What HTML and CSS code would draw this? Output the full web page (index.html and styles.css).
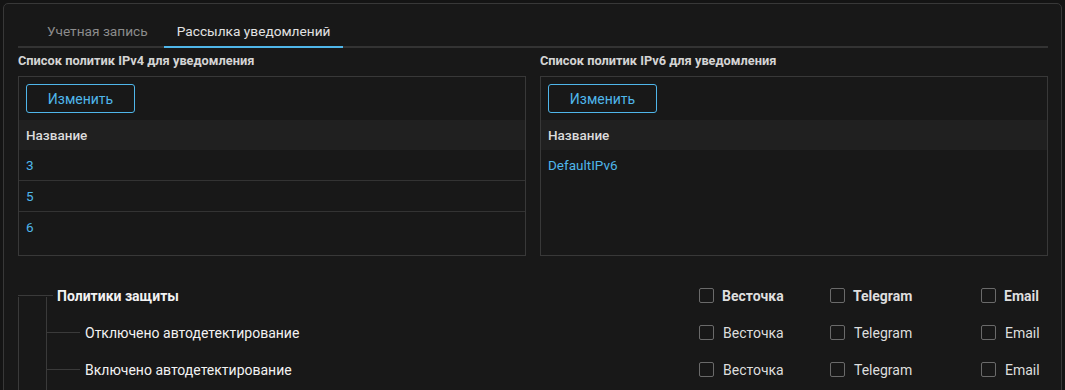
FILE: index.html
```html
<!DOCTYPE html>
<html lang="ru">
<head>
<meta charset="utf-8">
<link rel="stylesheet" href="styles.css">
</head>
<body>
<div class="card">
  <div class="tabs">
    <div class="tab">Учетная запись</div>
    <div class="tab active">Рассылка уведомлений</div>
  </div>
  <div class="lists">
    <section class="list">
      <div class="list-title">Список политик IPv4 для уведомления</div>
      <div class="panel">
        <button class="btn">Изменить</button>
        <div class="table">
          <div class="thead">Название</div>
          <div class="trow">3</div>
          <div class="trow">5</div>
          <div class="trow">6</div>
        </div>
      </div>
    </section>
    <section class="list">
      <div class="list-title">Список политик IPv6 для уведомления</div>
      <div class="panel">
        <button class="btn">Изменить</button>
        <div class="table">
          <div class="thead">Название</div>
          <div class="trow">DefaultIPv6</div>
        </div>
      </div>
    </section>
  </div>
  <div class="tree">
    <div class="tree-row root">
      <div class="label">Политики защиты</div>
      <div class="opts">
        <label class="opt o1"><span class="cb"></span><span>Весточка</span></label>
        <label class="opt o2"><span class="cb"></span><span>Telegram</span></label>
        <label class="opt o3"><span class="cb"></span><span>Email</span></label>
      </div>
    </div>
    <div class="tree-row child">
      <div class="label">Отключено автодетектирование</div>
      <div class="opts">
        <label class="opt o1"><span class="cb"></span><span>Весточка</span></label>
        <label class="opt o2"><span class="cb"></span><span>Telegram</span></label>
        <label class="opt o3"><span class="cb"></span><span>Email</span></label>
      </div>
    </div>
    <div class="tree-row child">
      <div class="label">Включено автодетектирование</div>
      <div class="opts">
        <label class="opt o1"><span class="cb"></span><span>Весточка</span></label>
        <label class="opt o2"><span class="cb"></span><span>Telegram</span></label>
        <label class="opt o3"><span class="cb"></span><span>Email</span></label>
      </div>
    </div>
  </div>
</div>
</body>
</html>
```

FILE: styles.css
```css
* { box-sizing: border-box; }
html, body { margin: 0; padding: 0; }
body {
  background: #141414;
  font-family: Roboto, "Liberation Sans", sans-serif;
  color: #e4e4e4;
  height: 390px;
  overflow: hidden;
}
.card {
  margin: 3px 3px 0 3px;
  border: 1px solid #383838;
  border-radius: 5px;
  background: #181818;
  padding: 12px 13px 0 14px;
  min-height: 420px;
}
.tabs {
  display: flex;
  gap: 3px;
  padding-left: 16px;
  border-bottom: 2px solid #333;
}
.tab {
  font-size: 13.7px;
  line-height: 16px;
  padding: 7px 13px;
  color: #8c8c8c;
  margin-bottom: -2px;
  border-bottom: 2px solid transparent;
}
.tab.active {
  color: #e2e2e2;
  border-bottom-color: #4fb6ea;
}
.lists {
  display: grid;
  grid-template-columns: 1fr 1fr;
  gap: 14px;
}
.list-title {
  font-size: 12.8px;
  font-weight: 700;
  line-height: 14px;
  padding: 6px 0 8px;
  color: #d4d4d4;
}
.panel {
  border: 1px solid #383838;
  height: 180px;
  padding-top: 7px;
}
.btn {
  display: block;
  margin-left: 7px;
  width: 109px;
  height: 29px;
  background: transparent;
  border: 1px solid #4fb6ea;
  border-radius: 3px;
  color: #4fb6ea;
  font-family: inherit;
  font-size: 14px;
  padding: 0;
}
.table { margin-top: 7px; }
.thead {
  background: #202020;
  height: 30px;
  line-height: 30px;
  padding-left: 7px;
  font-size: 13.5px;
  font-weight: 500;
  color: #dcdcdc;
}
.trow {
  height: 31px;
  line-height: 30px;
  padding-left: 7px;
  font-size: 13.5px;
  color: #4fb6ea;
  border-bottom: 1px solid #333;
}
.trow:last-child { border-bottom: none; }
.tree {
  position: relative;
  margin-top: 21px;
  padding-bottom: 12px;
}
.tree::before {
  content: "";
  position: absolute;
  left: 0;
  top: 20px;
  bottom: 0;
  width: 1px;
  background: #3a3a3a;
}
.tree::after {
  content: "";
  position: absolute;
  left: 28px;
  top: 20px;
  bottom: 0;
  width: 1px;
  background: #3a3a3a;
}
.tree-row {
  position: relative;
  display: flex;
  align-items: center;
  height: 37px;
}
.tree-row::before {
  content: "";
  position: absolute;
  top: 18px;
  height: 1px;
  background: #3a3a3a;
}
.root::before { left: 0; width: 35px; }
.child::before { left: 28px; width: 34px; }
.label {
  flex: 1;
  font-size: 14px;
  color: #f2f2f2;
}
.root .label { padding-left: 39px; font-weight: 700; }
.child .label { padding-left: 67px; }
.opts {
  display: flex;
  width: 349px;
}
.opt {
  display: flex;
  align-items: center;
  gap: 9px;
  font-size: 14px;
  color: #dedede;
}
.root .opt { font-weight: 700; gap: 8px; }
.o1 { width: 131px; }
.o2 { width: 151px; }
.o3 { flex: 1; padding-left: 0; }
.cb {
  width: 15px;
  height: 15px;
  border: 1px solid #6a6a6a;
  border-radius: 2px;
  flex: none;
}
```
